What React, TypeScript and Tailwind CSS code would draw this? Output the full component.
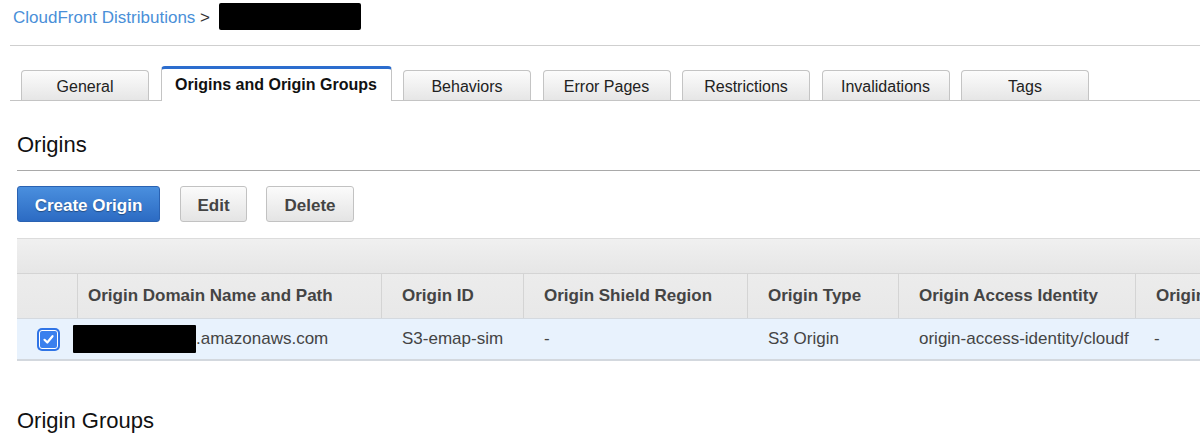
import React from "react";

const tabs = [
  "General",
  "Origins and Origin Groups",
  "Behaviors",
  "Error Pages",
  "Restrictions",
  "Invalidations",
  "Tags",
];

function Checkbox() {
  return (
    <div className="w-[23px] h-[23px] rounded-[5px] bg-[#2f74e6] p-[2px]">
      <div className="w-full h-full rounded-[3px] border border-white bg-[#3a80ee] flex items-center justify-center">
        <svg width="13" height="13" viewBox="0 0 13 13" fill="none">
          <path d="M2.5 6.8 L5.3 9.5 L10.5 3.2" stroke="white" strokeWidth="2.2" strokeLinecap="round" strokeLinejoin="round" />
        </svg>
      </div>
    </div>
  );
}

export default function App() {
  return (
    <div
      className="w-[1200px] h-[443px] overflow-hidden bg-white text-[#222]"
      style={{ fontFamily: '"Liberation Sans", Arial, sans-serif' }}
    >
      {/* Breadcrumb */}
      <div className="h-[45px] pl-[13px] pt-[7px] flex items-start text-[17px] leading-[22px]">
        <span className="text-[#4a8fd8]">CloudFront Distributions</span>
        <span className="text-[#333] whitespace-pre"> &gt; </span>
        <span className="inline-block ml-[4px] -mt-[4px] w-[142px] h-[27px] bg-black rounded-[2px]" />
      </div>
      <div className="ml-[10px] border-b border-[#cfcfcf]" />

      {/* Tabs */}
      <div className="ml-[10px] mt-[20px] pl-[11px] h-[35px] flex items-end gap-[11.5px] border-b border-[#c4c4c4]">
        {tabs.map((t, i) =>
          i === 1 ? (
            <div
              key={t}
              className="w-[231px] h-[35px] -mb-px bg-white border border-[#c4c4c4] border-b-0 border-t-[3px] border-t-[#2c6dce] rounded-t-[4px] flex items-center justify-center text-[16px] font-bold text-[#111] pb-[1px]"
            >
              {t}
            </div>
          ) : (
            <div
              key={t}
              className="w-[128px] h-[30px] bg-gradient-to-b from-[#fcfcfc] to-[#e6e6e6] border border-[#c4c4c4] border-b-0 rounded-t-[4px] flex items-center justify-center text-[16px] text-[#222] pt-[2px]"
            >
              {t}
            </div>
          )
        )}
      </div>

      <div className="ml-[17px]">
        {/* Origins heading */}
        <div className="mt-[30px] pb-[11px] border-b border-[#a9a9a9] text-[22px] leading-[28px] text-[#111]">
          Origins
        </div>

        {/* Buttons */}
        <div className="mt-[15px] flex items-center">
          <button
            className="w-[143px] h-[36px] pt-[3px] rounded-[3px] border border-[#2a62b2] bg-gradient-to-b from-[#4a8fde] to-[#2c6bc3] text-white text-[17px] font-bold"
            style={{ textShadow: "0 1px 1px rgba(0,0,0,0.35)" }}
          >
            Create Origin
          </button>
          <button className="ml-[20px] w-[67px] h-[36px] pt-[3px] rounded-[3px] border border-[#c2c2c2] bg-gradient-to-b from-[#fbfbfb] to-[#e4e4e4] text-[#444] text-[17px] font-bold">
            Edit
          </button>
          <button className="ml-[19px] w-[88px] h-[36px] pt-[3px] rounded-[3px] border border-[#c2c2c2] bg-gradient-to-b from-[#fbfbfb] to-[#e4e4e4] text-[#444] text-[17px] font-bold">
            Delete
          </button>
        </div>

        {/* Table */}
        <div className="mt-[16px] w-[1400px]">
          <div className="h-[35px] border-t border-[#dcdcdc] bg-gradient-to-b from-[#f0f0f0] to-[#e6e6e6]" />
          <div className="h-[45px] flex border-t border-[#d4d4d4] bg-gradient-to-b from-[#ececec] to-[#e8e8e8] text-[17px] font-bold text-[#444]">
            <div className="w-[61px] border-r border-[#d4d4d4]" />
            <div className="w-[304px] pl-[10px] flex items-center border-r border-[#d4d4d4]">Origin Domain Name and Path</div>
            <div className="w-[142px] pl-[20px] flex items-center border-r border-[#d4d4d4]">Origin ID</div>
            <div className="w-[224px] pl-[20px] flex items-center border-r border-[#d4d4d4]">Origin Shield Region</div>
            <div className="w-[151px] pl-[20px] flex items-center border-r border-[#d4d4d4]">Origin Type</div>
            <div className="w-[237px] pl-[20px] flex items-center border-r border-[#d4d4d4]">Origin Access Identity</div>
            <div className="w-[220px] pl-[20px] flex items-center">Origin</div>
          </div>
          <div className="h-[43px] flex border-t border-[#d4d9df] border-b-2 border-b-[#d3d8de] bg-[#e8f2fd] text-[17px] text-[#444]">
            <div className="w-[61px] pl-[20px] flex items-center">
              <Checkbox />
            </div>
            <div className="w-[304px] pl-[10px] flex items-center">
              <span className="inline-block -ml-[15px] w-[123px] h-[28px] bg-black rounded-[1px]" />
              <span>.amazonaws.com</span>
            </div>
            <div className="w-[142px] pl-[20px] flex items-center">S3-emap-sim</div>
            <div className="w-[224px] pl-[20px] flex items-center">-</div>
            <div className="w-[151px] pl-[20px] flex items-center">S3 Origin</div>
            <div className="w-[237px] pl-[20px] flex items-center whitespace-nowrap">origin-access-identity/cloudf</div>
            <div className="w-[220px] pl-[18px] flex items-center">-</div>
          </div>
        </div>

        {/* Origin Groups */}
        <div className="mt-[46px] text-[22px] leading-[28px] text-[#111]">Origin Groups</div>
      </div>
    </div>
  );
}
